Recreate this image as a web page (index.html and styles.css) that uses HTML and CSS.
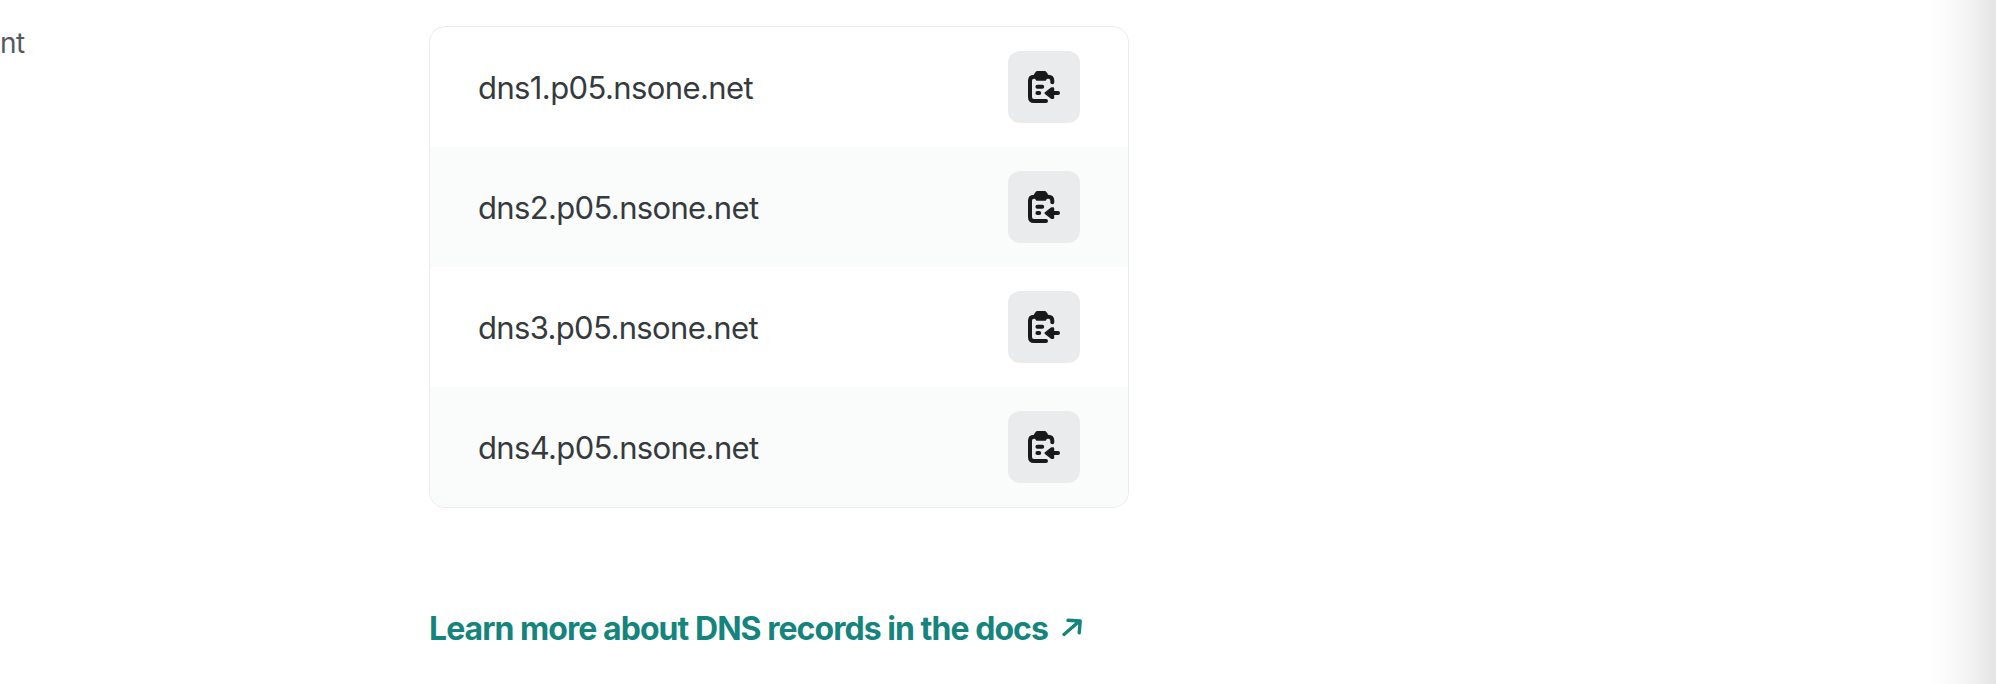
FILE: index.html
```
<!DOCTYPE html>
<html lang="en">
<head>
<meta charset="utf-8">
<title>Name servers</title>
<link rel="stylesheet" href="styles.css">
</head>
<body>
<svg class="defs" aria-hidden="true">
  <symbol id="copy" viewBox="0 0 32 32">
    <path class="line" d="M8 5.7H6C3.5 5.7 2 7.2 2 9.7V26C2 28.5 3.5 30 6 30H18M18 5.7H20.3C22.8 5.7 24.3 7.2 24.3 9.7V11.2M9.4 15.8H14.2M9.4 21.9H11.2M24 22.1H30"/>
    <path class="solid" d="M9 1.2H17L18.7 3.5V6L17 8.5H9L7.3 6V3.5Z"/>
    <path class="solid" d="M17.7 22.1L23.7 17.4H25V26.8H23.7Z"/>
  </symbol>
</svg>
<main class="page">
  <aside class="description">nt</aside>
  <section class="content">
    <ul class="servers">
      <li class="server"><span class="name first">dns1.p05.nsone.net</span><button class="copy" aria-label="Copy"><svg class="icon"><use href="#copy"/></svg></button></li>
      <li class="server"><span class="name">dns2.p05.nsone.net</span><button class="copy" aria-label="Copy"><svg class="icon"><use href="#copy"/></svg></button></li>
      <li class="server"><span class="name">dns3.p05.nsone.net</span><button class="copy" aria-label="Copy"><svg class="icon"><use href="#copy"/></svg></button></li>
      <li class="server"><span class="name">dns4.p05.nsone.net</span><button class="copy" aria-label="Copy"><svg class="icon"><use href="#copy"/></svg></button></li>
    </ul>
    <a class="docs"><span class="label">Learn more about DNS records in the docs</span><svg class="arrow" viewBox="0 0 20 20"><path d="M2 16.5L17.5 3M6 2.3L18.2 3L17.2 14.8"/></svg></a>
  </section>
  <div class="edge"></div>
</main>
</body>
</html>
```
FILE: styles.css
```
* { box-sizing: border-box; }
body { margin: 0; background: #fff; font-family: Inter, "Liberation Sans", sans-serif; }
.defs { position: absolute; width: 0; height: 0; }
.page { display: flex; height: 684px; overflow: hidden; }
.description { width: 429px; padding-top: 23px; font-size: 28px; line-height: 40px; letter-spacing: -0.5px; color: #545a61; }
.content { width: 700px; padding-top: 26px; }
.servers { list-style: none; margin: 0; padding: 0; border: 1px solid #e9ebed; border-radius: 16px; }
.server { display: flex; align-items: center; justify-content: space-between; height: 120px; padding: 0 48px; }
.server:nth-child(even) { background: #fafbfb; }
.server:last-child { border-radius: 0 0 15px 15px; }
.name { padding-top: 2px; font-size: 31px; font-weight: 430; line-height: 40px; letter-spacing: -0.65px; color: #353a3e; }
.first { letter-spacing: -0.6px; }
.copy { display: flex; align-items: center; justify-content: center; width: 72px; height: 72px; padding: 0; border: 0; border-radius: 12px; background: #e9ebed; }
.icon { width: 32px; height: 32px; }
.line { fill: none; stroke: #181a1c; stroke-width: 4; stroke-linecap: round; stroke-linejoin: round; }
.solid { fill: #181a1c; stroke: #181a1c; stroke-width: 2.4; stroke-linejoin: round; }
.docs { display: flex; align-items: center; height: 40px; margin-top: 101px; color: #15847d; }
.label { font-size: 32px; font-weight: 650; line-height: 40px; letter-spacing: -0.95px; white-space: nowrap; }
.arrow { width: 20px; height: 20px; margin: 0 0 2px 14px; fill: none; stroke: #15847d; stroke-width: 3.4; stroke-linecap: round; stroke-linejoin: round; }
.edge { width: 72px; margin-left: auto; background: linear-gradient(to right, #fff 0%, #fcfcfc 27%, #f7f7f7 50%, #eee 75%, #e3e3e3 100%); }
```
